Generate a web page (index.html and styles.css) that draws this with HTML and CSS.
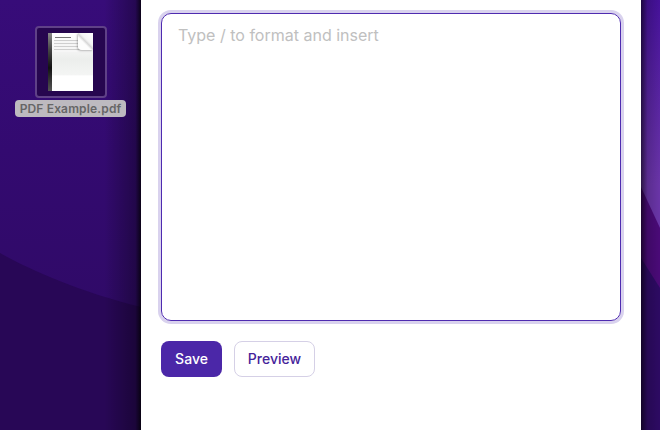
FILE: index.html
```html
<!DOCTYPE html>
<html lang="en">
<head>
<meta charset="utf-8">
<title>Editor</title>
<link rel="stylesheet" href="styles.css">
</head>
<body>
<div class="desktop">
  <aside class="wall wall-left">
    <svg class="wall-art" width="141" height="430" viewBox="0 0 141 430" aria-hidden="true">
      <defs>
        <linearGradient id="leftBase" x1="0" y1="0" x2="0" y2="1">
          <stop offset="0" stop-color="#370c79"/>
          <stop offset="0.35" stop-color="#330a70"/>
          <stop offset="0.7" stop-color="#300a68"/>
        </linearGradient>
        <linearGradient id="leftEdge" x1="0" y1="0" x2="1" y2="0">
          <stop offset="0.74" stop-color="#000" stop-opacity="0"/>
          <stop offset="0.96" stop-color="#000" stop-opacity="0.32"/>
          <stop offset="1" stop-color="#000" stop-opacity="0.8"/>
        </linearGradient>
      </defs>
      <rect width="141" height="430" fill="url(#leftBase)"/>
      <path d="M0 253 C 30 270 80 292 141 307 V430 H0 Z" fill="#280756"/>
      <rect width="141" height="430" fill="url(#leftEdge)"/>
    </svg>
    <figure class="file">
      <div class="thumb">
        <div class="page">
          <div class="page-spine"></div>
          <div class="page-sheet">
            <div class="page-title"></div>
            <div class="page-lines"></div>
            <div class="page-fold"></div>
          </div>
        </div>
      </div>
      <figcaption class="file-name">PDF Example.pdf</figcaption>
    </figure>
  </aside>
  <main class="panel">
    <div class="editor">
      <div class="placeholder">Type / to format and insert</div>
    </div>
    <div class="actions">
      <button class="btn btn-primary" type="button">Save</button>
      <button class="btn btn-secondary" type="button">Preview</button>
    </div>
  </main>
  <aside class="wall wall-right">
    <svg class="wall-art" width="19" height="430" viewBox="0 0 19 430" aria-hidden="true">
      <defs>
        <linearGradient id="rightBase" x1="0" y1="0" x2="0" y2="1">
          <stop offset="0" stop-color="#45119a"/>
          <stop offset="0.43" stop-color="#6a35a8"/>
        </linearGradient>
        <linearGradient id="rightEdge" x1="0" y1="0" x2="1" y2="0">
          <stop offset="0" stop-color="#000" stop-opacity="0.6"/>
          <stop offset="0.35" stop-color="#000" stop-opacity="0.15"/>
          <stop offset="1" stop-color="#000" stop-opacity="0"/>
        </linearGradient>
      </defs>
      <rect width="19" height="430" fill="url(#rightBase)"/>
      <path d="M0 187 L19 228 V430 H0 Z" fill="#4a0a78"/>
      <path d="M0 258 L19 288 V430 H0 Z" fill="#2d0a63"/>
      <rect width="19" height="430" fill="url(#rightEdge)"/>
    </svg>
  </aside>
</div>
</body>
</html>
```
FILE: styles.css
```css
* { box-sizing: border-box; }
html, body { margin: 0; padding: 0; }
body {
  width: 660px;
  height: 430px;
  overflow: hidden;
  font-family: Inter, "Liberation Sans", sans-serif;
  background: #fff;
}
.desktop {
  display: flex;
  width: 660px;
  height: 430px;
}
.wall {
  position: relative;
  flex: none;
  overflow: hidden;
}
.wall-left { width: 141px; }
.wall-right { width: 19px; }
.wall-art {
  position: absolute;
  left: 0;
  top: 0;
  display: block;
}
.file {
  position: relative;
  margin: 26px 0 0 15px;
  width: 111px;
  display: flex;
  flex-direction: column;
  align-items: center;
  gap: 2px;
}
.thumb {
  width: 72px;
  height: 72px;
  border: 2px solid #5f4187;
  border-radius: 4px;
  background: #26064f;
  display: flex;
  align-items: center;
  justify-content: center;
}
.page {
  width: 45px;
  height: 58px;
  display: flex;
  background: #fff;
  filter: blur(0.5px);
}
.page-spine {
  width: 4px;
  background: linear-gradient(180deg, #888 0, #444 30%, #111 60%, #555 100%);
}
.page-sheet {
  position: relative;
  flex: 1;
  background: linear-gradient(180deg, #fff 0, #f6f6f6 26%, #eceeec 45%, #f4f5f4 72%, #fff 74%);
}
.page-title {
  margin: 4px 0 0 3px;
  width: 16px;
  height: 1px;
  background: #777;
}
.page-lines {
  margin: 2px 0 0 2px;
  width: 36px;
  height: 12px;
  background: repeating-linear-gradient(180deg, #cfcfcf 0 1px, #f6f6f6 1px 3px);
}
.page-fold {
  position: absolute;
  right: 0;
  top: 0;
  width: 15px;
  height: 17px;
  border-radius: 0 0 0 4px;
  background: linear-gradient(45deg, #fdfdfd 0 40%, #d8d8d8 50%, #f4f4f4 60%, #fff 100%);
  box-shadow: -1px 1px 2px rgba(0, 0, 0, 0.25);
}
.file-name {
  width: 111px;
  height: 17px;
  border-radius: 4px;
  background: #bdbabf;
  color: #666;
  font-family: Inter, "Liberation Sans", sans-serif;
  font-size: 12px;
  font-weight: 600;
  letter-spacing: 0.15px;
  line-height: 17px;
  text-align: center;
  white-space: nowrap;
}
.panel {
  flex: none;
  width: 500px;
  height: 430px;
  background: #fff;
  padding: 13px 19px 0 20px;
}
.editor {
  width: 460px;
  height: 308px;
  border: 1.5px solid #4f2bb0;
  border-radius: 10px;
  box-shadow: 0 0 0 3px #d9d2ee;
  padding: 11px 16px;
}
.placeholder {
  font-size: 16px;
  line-height: 20px;
  color: #c0c0c0;
}
.actions {
  display: flex;
  gap: 12px;
  margin-top: 20px;
}
.btn {
  height: 36px;
  border-radius: 8px;
  font-family: Inter, "Liberation Sans", sans-serif;
  font-size: 14px;
  font-weight: 500;
  line-height: 20px;
  padding: 0;
}
.btn-primary {
  width: 61px;
  border: 0;
  background: #4b27a8;
  color: #fff;
}
.btn-secondary {
  width: 81px;
  border: 1px solid #d5d0e6;
  background: #fff;
  color: #45239a;
}
```
